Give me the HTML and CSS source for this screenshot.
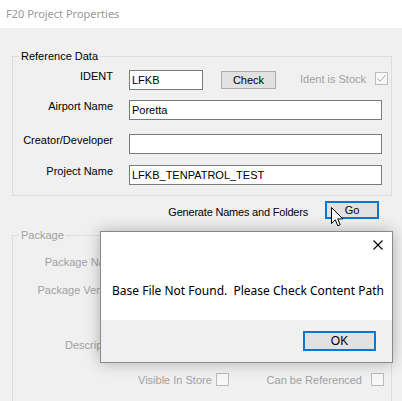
FILE: index.html
```html
<!DOCTYPE html>
<html>
<head>
<meta charset="utf-8">
<title>F20 Project Properties</title>
<link rel="stylesheet" href="styles.css">
</head>
<body>
<div class="window">
  <div class="titlebar">F20 Project Properties</div>
  <div class="client">
    <fieldset class="group">
      <legend>Reference Data</legend>
      <div class="row r-ident">
        <span class="label">IDENT</span>
        <input class="field short" type="text" value="LFKB" readonly>
        <button class="btn check">Check</button>
        <span class="muted stock-label">Ident is Stock</span>
        <span class="checkbox disabled">
          <svg viewBox="0 0 13 13" width="13" height="13"><path d="M2.5 6.5 L5.2 9.2 L10.5 3.2" fill="none" stroke="#a9a9a9" stroke-width="1"/></svg>
        </span>
      </div>
      <div class="row r-airport">
        <span class="label">Airport Name</span>
        <input class="field long" type="text" value="Poretta" readonly>
      </div>
      <div class="row r-creator">
        <span class="label">Creator/Developer</span>
        <input class="field long" type="text" value="" readonly>
      </div>
      <div class="row r-project">
        <span class="label">Project Name</span>
        <input class="field long" type="text" value="LFKB_TENPATROL_TEST" readonly>
      </div>
    </fieldset>

    <div class="generate">
      <span class="gen-label">Generate Names and Folders</span>
      <button class="btn focused go">Go</button>
    </div>

    <fieldset class="group package">
      <legend>Package</legend>
      <div class="row p-name">
        <span class="label wide">Package Name</span>
      </div>
      <div class="row p-version">
        <span class="label wide">Package Version</span>
      </div>
      <div class="row p-desc">
        <span class="label wide">Description</span>
      </div>
      <div class="row p-flags">
        <span class="muted vis-label">Visible In Store</span>
        <span class="checkbox disabled"></span>
        <span class="muted ref-label">Can be Referenced</span>
        <span class="checkbox disabled"></span>
      </div>
    </fieldset>
  </div>

  <div class="msgbox">
    <div class="msg-body">
      <div class="msg-top">
        <svg class="close" viewBox="0 0 10 10" width="10" height="10"><path d="M0.5 0.5 L9.5 9.5 M9.5 0.5 L0.5 9.5" stroke="#000" stroke-width="1.1" fill="none"/></svg>
      </div>
      <p class="msg-text">Base File Not Found.&nbsp; Please Check Content Path</p>
    </div>
    <div class="msg-foot">
      <button class="btn focused ok">OK</button>
    </div>
  </div>

  <svg class="pointer" viewBox="0 0 13 20" width="13" height="20">
    <path d="M0.5 0.5 L0.5 16.5 L4.3 12.8 L6.8 18.8 L9.2 17.8 L6.7 11.9 L11.8 11.9 Z" fill="#fff" stroke="#000" stroke-width="1" stroke-linejoin="miter"/>
  </svg>
</div>
</body>
</html>
```
FILE: styles.css
```css
html, body {
  margin: 0;
  padding: 0;
}

body {
  background: #f0f0f0;
  font: 11px/13px "Liberation Sans", Arial, sans-serif;
  color: #000;
}

.window {
  position: relative;
  width: 402px;
  height: 401px;
  overflow: hidden;
}

/* caption bar of an inactive window */
.titlebar {
  height: 28px;
  box-sizing: border-box;
  background: #fff;
  padding-left: 6px;
  font: 11px/27px "Noto Sans", "Open Sans", sans-serif;
  color: #999;
}

.client {
  padding-top: 22px;
}

/* group boxes */
.group {
  margin: 0 10px 0 12px;
  padding: 7px 0 10px 6px;
  border: 1px solid #dcdcdc;
  min-width: 0;
}

.group legend {
  padding: 0 2px;
  line-height: 13px;
}

.row {
  display: flex;
  align-items: flex-start;
  height: 20px;
}

.label {
  width: 94px;
  flex: none;
  text-align: right;
  white-space: nowrap;
}

.r-airport { margin-top: 10px; }
.r-creator { margin-top: 14px; }
.r-project { margin-top: 11px; }

.field {
  box-sizing: border-box;
  height: 20px;
  margin: 0 0 0 16px;
  padding: 0 2px;
  border: 1px solid #7a7a7a;
  background: #fff;
  font: 11px "Liberation Sans", Arial, sans-serif;
  color: #000;
  outline: none;
}

.field.short { width: 74px; }
.field.long { width: 253px; }

/* push buttons */
.btn {
  box-sizing: border-box;
  height: 18px;
  padding: 0;
  border: 1px solid #adadad;
  background: #e1e1e1;
  font: 11px/13px "Liberation Sans", Arial, sans-serif;
  color: #000;
}

.btn.focused {
  border: 2px solid #0078d7;
}

.check {
  width: 55px;
  margin: 1px 0 0 18px;
}

.muted {
  color: #a0a0a0;
  white-space: nowrap;
}

.stock-label {
  margin: 3px 0 0 24px;
}

.checkbox {
  box-sizing: border-box;
  display: inline-block;
  width: 13px;
  height: 13px;
  flex: none;
  background: #fff;
  border: 1px solid #333;
}

.checkbox svg {
  display: block;
  margin: -1px;
}

.checkbox.disabled {
  border-color: #bcbcbc;
  background: #f7f7f7;
}

.r-ident .checkbox {
  margin: 2px 0 0 9px;
}

/* generate row */
.generate {
  display: flex;
  justify-content: flex-end;
  align-items: flex-end;
  margin: 5px 23px 0 0;
}

.gen-label {
  margin-right: 17px;
  line-height: 13px;
  letter-spacing: -0.2px;
}

.go {
  width: 54px;
}

/* disabled package group */
.package {
  margin-top: 10px;
  padding-top: 14px;
  padding-bottom: 40px;
}

.package legend,
.package .label {
  color: #a0a0a0;
}

.label.wide {
  width: 101px;
}

.p-version { margin-top: 8px; }
.p-desc { margin-top: 35px; }

.p-flags {
  margin-top: 15px;
  padding-left: 119px;
}

.p-flags .checkbox {
  margin-top: -1px;
}

.vis-label {
  width: 78px;
  flex: none;
}

.ref-label {
  width: 133px;
  flex: none;
  text-align: right;
  padding-right: 9px;
}

/* message box shown over the form */
.msgbox {
  position: absolute;
  left: 100px;
  top: 231px;
  width: 293px;
  height: 132px;
  box-sizing: border-box;
  border: 1px solid #8a8a8a;
  background: #f0f0f0;
  box-shadow: 0 0 14px rgba(0, 0, 0, 0.28);
  display: flex;
  flex-direction: column;
}

.msg-body {
  height: 88px;
  background: #fff;
}

.msg-top {
  display: flex;
  justify-content: flex-end;
  padding: 8px 9px 0 0;
}

.close {
  display: block;
}

.msg-text {
  margin: 33px 0 0 11px;
  font: 12px/16px "Noto Sans", "Open Sans", sans-serif;
  white-space: nowrap;
}

.msg-foot {
  flex: 1;
  display: flex;
  justify-content: flex-end;
  align-items: flex-start;
  padding: 11px 16px 0 0;
}

.ok {
  width: 73px;
  height: 20px;
  font-size: 12px;
}

/* mouse pointer resting on the Go button */
.pointer {
  position: absolute;
  left: 331px;
  top: 207px;
}
```
